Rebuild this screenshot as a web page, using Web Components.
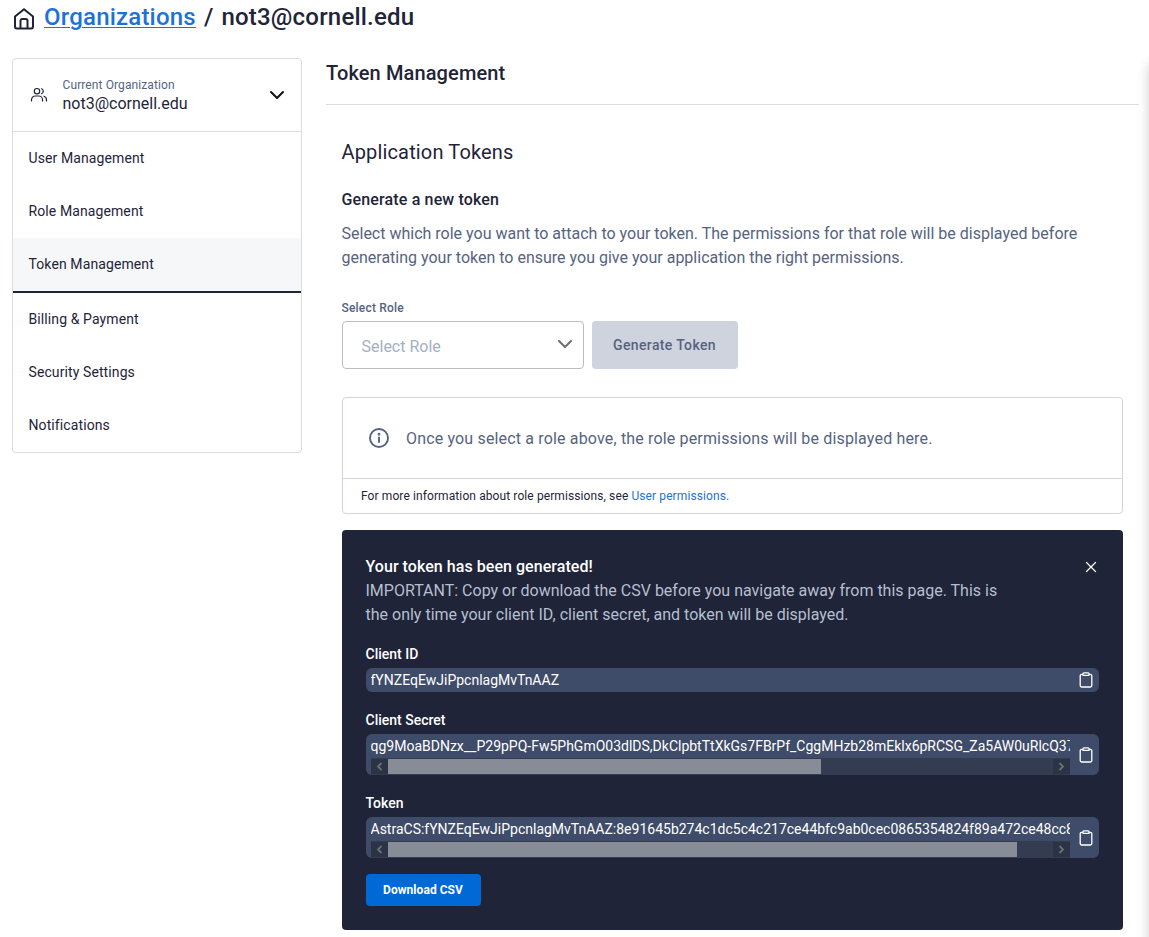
<!DOCTYPE html>
<html>
<head>
<meta charset="utf-8">
<title>Token Management</title>
<style>
    html, body { margin: 0; height: 937px; overflow: hidden; background: #fff; }
    body { font-family: Roboto, "Liberation Sans", sans-serif; color: #1f2438; }
</style>
</head>
<body>
<org-page></org-page>
<script>
const ICONS = {
    home: '<svg width="24" height="24" viewBox="0 0 24 24" fill="none" stroke="#1f2438" stroke-width="2" stroke-linejoin="round"><path d="M3 10.6 12 3.2l9 7.4v10a1.9 1.9 0 0 1-1.9 1.9H4.9A1.9 1.9 0 0 1 3 20.6z"/><path d="M8.5 22.5v-7.7A1.8 1.8 0 0 1 10.3 13h3.4a1.8 1.8 0 0 1 1.8 1.8v7.7"/></svg>',
    users: '<svg width="18" height="18" viewBox="0 0 18 18" fill="none" stroke="#1f2438" stroke-width="1.2" stroke-linecap="round"><circle cx="7" cy="5.2" r="2.7"/><path d="M1.5 15v-1.3A3.7 3.7 0 0 1 5.2 10h3.6a3.7 3.7 0 0 1 3.7 3.7V15"/><path d="M11.6 2.7a2.7 2.7 0 0 1 0 5M14 10.2a3.7 3.7 0 0 1 2.5 3.5V15"/></svg>',
    chevron: '<svg width="16" height="10" viewBox="0 0 16 10" fill="none" stroke="currentColor" stroke-width="2" stroke-linecap="round" stroke-linejoin="round"><path d="m2 2 6 6 6-6"/></svg>',
    info: '<svg width="22" height="22" viewBox="0 0 22 22" fill="none" stroke="#56637f" stroke-width="1.9" stroke-linecap="round"><circle cx="11" cy="11" r="9"/><path d="M11 10.4v4.6"/><circle cx="11" cy="7.2" r=".5" fill="#56637f"/></svg>',
    close: '<svg width="12" height="12" viewBox="0 0 12 12" fill="none" stroke="#fff" stroke-width="1.3" stroke-linecap="round"><path d="m1.5 1.5 9 9M10.5 1.5l-9 9"/></svg>',
    clipboard: '<svg width="14" height="16" viewBox="0 0 14 16" fill="none" stroke="#fff" stroke-width="1.3" stroke-linejoin="round"><path d="M4 2.3H2.6A1.4 1.4 0 0 0 1.2 3.7v9.9A1.4 1.4 0 0 0 2.6 15h8.8a1.4 1.4 0 0 0 1.4-1.4V3.7a1.4 1.4 0 0 0-1.4-1.4H10"/><path d="M4 1.8A.9.9 0 0 1 4.9.9h4.2a.9.9 0 0 1 .9.9v1.6H4z"/></svg>'
};

// turns a small html string into a shadow root
class Base extends HTMLElement {
    render(html) {
        if (!this.shadowRoot) this.attachShadow({ mode: 'open' });
        this.shadowRoot.innerHTML = html;
    }
}

class BreadcrumbBar extends Base {
    connectedCallback() {
        this.render(`
            <style>
                :host { display: flex; align-items: center; height: 35px; padding-left: 12px; font-size: 24px; font-weight: 500; line-height: 35px; letter-spacing: .2px; color: #1f2438; }
                svg { display: block; margin-right: 8px; }
                a { color: #1c72d8; text-decoration: underline; text-decoration-thickness: 1px; text-underline-offset: 2px; }
                .sep { margin: 0 8px; }
            </style>
            ${ICONS.home}<a>Organizations</a><span class="sep">/</span><span>not3@cornell.edu</span>
        `);
    }
}

class SideItem extends Base {
    connectedCallback() {
        this.render(`
            <style>
                :host { display: flex; align-items: center; box-sizing: border-box; height: 53px; padding: 0 0 2px 15.5px; font-size: 14px; letter-spacing: .1px; color: #1f2438; }
                :host([active]) { background: #f6f7f9; border-bottom: 2px solid #1f2438; height: 55px; padding-bottom: 1px; }
            </style>
            <slot></slot>
        `);
    }
}

class OrgSidebar extends Base {
    connectedCallback() {
        this.render(`
            <style>
                :host { display: block; box-sizing: border-box; width: 290px; height: 395px; border: 1px solid #dcdcdc; border-radius: 4px; }
                .org { display: flex; align-items: center; box-sizing: border-box; height: 73px; padding: 0 16px 0 17px; border-bottom: 1px solid #dcdcdc; }
                .org > svg { margin-right: 14.5px; }
                .names { flex: 1; padding-top: 1px; }
                .label { font-size: 12px; line-height: 16px; letter-spacing: .1px; color: #56637f; }
                .name { margin-top: 1px; font-size: 16px; line-height: 20px; color: #1f2438; }
                .chev { color: #111; display: block; }
                .chev svg { display: block; }
            </style>
            <div class="org">
                ${ICONS.users}
                <div class="names">
                    <div class="label">Current Organization</div>
                    <div class="name">not3@cornell.edu</div>
                </div>
                <span class="chev">${ICONS.chevron}</span>
            </div>
            <slot></slot>
        `);
    }
}

class RolePicker extends Base {
    connectedCallback() {
        this.render(`
            <style>
                :host { display: block; }
                label { display: block; font-size: 12px; font-weight: 500; line-height: 16px; letter-spacing: .2px; color: #56637f; margin-bottom: 5px; }
                .row { display: flex; gap: 8px; }
                .select { display: flex; align-items: center; justify-content: space-between; box-sizing: border-box; width: 242px; height: 48px; padding: 2px 10px 0 19px; border: 1px solid #bdbdbd; border-radius: 4px; font-size: 16px; color: #a5b0c2; }
                .select span:last-child { color: #6f6f6f; display: block; margin-top: -4px; }
                .select svg { display: block; }
                button { width: 146px; height: 48px; padding: 0; border: 0; border-radius: 4px; background: #ced3de; color: #56637f; font: 500 14px Roboto, sans-serif; letter-spacing: .35px; }
            </style>
            <label>Select Role</label>
            <div class="row">
                <div class="select"><span>Select Role</span><span>${ICONS.chevron}</span></div>
                <button>Generate Token</button>
            </div>
        `);
    }
}

class InfoPanel extends Base {
    connectedCallback() {
        this.render(`
            <style>
                :host { display: block; box-sizing: border-box; height: 117px; border: 1px solid #d0d5e2; border-radius: 4px; }
                .msg { display: flex; align-items: center; gap: 16px; box-sizing: border-box; height: 81px; padding-left: 25.5px; border-bottom: 1px solid #d0d5e2; font-size: 16px; letter-spacing: .16px; color: #56637f; }
                svg { display: block; }
                .more { display: flex; align-items: center; height: 34px; padding-left: 18.5px; font-size: 12px; letter-spacing: .1px; color: #1f2438; white-space: pre; }
                a { color: #1c72d8; }
            </style>
            <div class="msg">${ICONS.info}<span>Once you select a role above, the role permissions will be displayed here.</span></div>
            <div class="more">For more information about role permissions, see <a>User permissions.</a></div>
        `);
    }
}

// value row; the scrollbar is drawn only when thumb is given (width of thumb in px)
class SecretField extends Base {
    connectedCallback() {
        const thumb = this.getAttribute('thumb');
        const bar = thumb ? `
            <div class="bar">
                <span class="btn"><svg width="7" height="9" viewBox="0 0 7 9" fill="none" stroke="#6a6f7c" stroke-width="1.8"><path d="M5.5 1 2 4.5 5.500 8"/></svg></span>
                <span class="thumb" style="width:${thumb}px"></span>
                <span class="rest"></span>
                <span class="btn"><svg width="7" height="9" viewBox="0 0 7 9" fill="none" stroke="#6a6f7c" stroke-width="1.8"><path d="M1.5 1 5 4.5 1.5 8"/></svg></span>
            </div>` : '';
        this.render(`
            <style>
                :host { display: block; margin-bottom: 18px; }
                :host(:last-child) { margin-bottom: 16px; }
                label { display: block; font-size: 14px; font-weight: 500; line-height: 20px; color: #fff; margin-bottom: 4px; }
                .box { display: flex; align-items: stretch; background: #3f4c69; border-radius: 6px; width: 733px; }
                .main { width: 699px; margin-left: 5px; min-width: 0; }
                .val { height: 24px; line-height: 24px; font-size: 14px; color: #fff; white-space: nowrap; overflow: hidden; }
                .bar { display: flex; height: 17px; background: #343c52; }
                .btn { display: flex; align-items: center; justify-content: center; width: 17px; margin: 1px 0; background: #2c3344; }
                .thumb { margin: 1px 0; background: #878c96; }
                .rest { flex: 1; }
                .copy { flex: 1; display: flex; align-items: center; justify-content: center; padding-left: 3px; }
                svg { display: block; }
            </style>
            <label>${this.getAttribute('label')}</label>
            <div class="box">
                <div class="main"><div class="val">${this.getAttribute('value')}</div>${bar}</div>
                <div class="copy">${ICONS.clipboard}</div>
            </div>
        `);
    }
}

class TokenAlert extends Base {
    connectedCallback() {
        this.render(`
            <style>
                :host { display: block; position: relative; box-sizing: border-box; height: 400px; padding: 25px 24px 0; background: #1f2438; border-radius: 4px; }
                h4 { margin: 0; font-size: 16px; font-weight: 500; line-height: 24px; letter-spacing: .05px; color: #fff; }
                p { margin: 0 0 17px; width: 640px; font-size: 16px; line-height: 24px; color: #b6bfcf; }
                .close { position: absolute; top: 31px; right: 26px; }
                svg { display: block; }
                button { display: block; width: 115px; height: 32px; padding: 0; border: 0; border-radius: 4px; background: #0069d6; color: #fff; font: 700 12px Roboto, sans-serif; letter-spacing: .05px; }
            </style>
            <h4>Your token has been generated!</h4>
            <p>IMPORTANT: Copy or download the CSV before you navigate away from this page. This is the only time your client ID, client secret, and token will be displayed.</p>
            <span class="close">${ICONS.close}</span>
            <slot></slot>
            <button>Download CSV</button>
        `);
    }
}

class TokenPanel extends Base {
    connectedCallback() {
        this.render(`
            <style>
                :host { display: block; width: 813px; }
                h1 { margin: 0; height: 46px; line-height: 31px; font-size: 20px; font-weight: 500; letter-spacing: .12px; color: #1f2438; border-bottom: 1px solid #dcdcdc; }
                .body { padding: 31px 16px 0 15.5px; }
                h2 { margin: 0 0 20px; font-size: 20px; font-weight: 400; line-height: 32px; letter-spacing: .15px; color: #1f2438; }
                h3 { margin: 0 0 10px; font-size: 16px; font-weight: 500; line-height: 24px; letter-spacing: .15px; color: #1f2438; }
                p { margin: 0 0 30px; font-size: 16px; line-height: 24px; color: #56637f; }
                info-panel { margin: 28px 0 16px; }
            </style>
            <h1>Token Management</h1>
            <div class="body">
                <h2>Application Tokens</h2>
                <h3>Generate a new token</h3>
                <p>Select which role you want to attach to your token. The permissions for that role will be displayed before generating your token to ensure you give your application the right permissions.</p>
                <role-picker></role-picker>
                <info-panel></info-panel>
                <slot></slot>
            </div>
        `);
    }
}

class OrgPage extends Base {
    connectedCallback() {
        this.render(`
            <style>
                :host { display: block; position: relative; height: 937px; overflow: hidden; }
                .cols { display: flex; gap: 24px; padding: 23px 0 0 12px; }
                .edge { position: absolute; left: 1149px; top: 64px; bottom: -20px; width: 20px; box-shadow: 0 0 12px rgba(0, 0, 0, .2); }
            </style>
            <breadcrumb-bar></breadcrumb-bar>
            <div class="cols">
                <org-sidebar>
                    <side-item>User Management</side-item>
                    <side-item>Role Management</side-item>
                    <side-item active>Token Management</side-item>
                    <side-item>Billing &amp; Payment</side-item>
                    <side-item>Security Settings</side-item>
                    <side-item>Notifications</side-item>
                </org-sidebar>
                <token-panel>
                    <token-alert>
                        <secret-field label="Client ID" value="fYNZEqEwJiPpcnlagMvTnAAZ"></secret-field>
                        <secret-field label="Client Secret" thumb="433" value="qg9MoaBDNzx__P29pPQ-Fw5PhGmO03dlDS,DkClpbtTtXkGs7FBrPf_CggMHzb28mEklx6pRCSG_Za5AW0uRlcQ37vT2kYw8LhX1nJd5sPqRe9uZb"></secret-field>
                        <secret-field label="Token" thumb="629" value="AstraCS:fYNZEqEwJiPpcnlagMvTnAAZ:8e91645b274c1dc5c4c217ce44bfc9ab0cec0865354824f89a472ce48cc8f2a1b7"></secret-field>
                    </token-alert>
                </token-panel>
            </div>
            <div class="edge"></div>
        `);
    }
}

customElements.define('breadcrumb-bar', BreadcrumbBar);
customElements.define('side-item', SideItem);
customElements.define('org-sidebar', OrgSidebar);
customElements.define('role-picker', RolePicker);
customElements.define('info-panel', InfoPanel);
customElements.define('secret-field', SecretField);
customElements.define('token-alert', TokenAlert);
customElements.define('token-panel', TokenPanel);
customElements.define('org-page', OrgPage);
</script>
</body>
</html>
